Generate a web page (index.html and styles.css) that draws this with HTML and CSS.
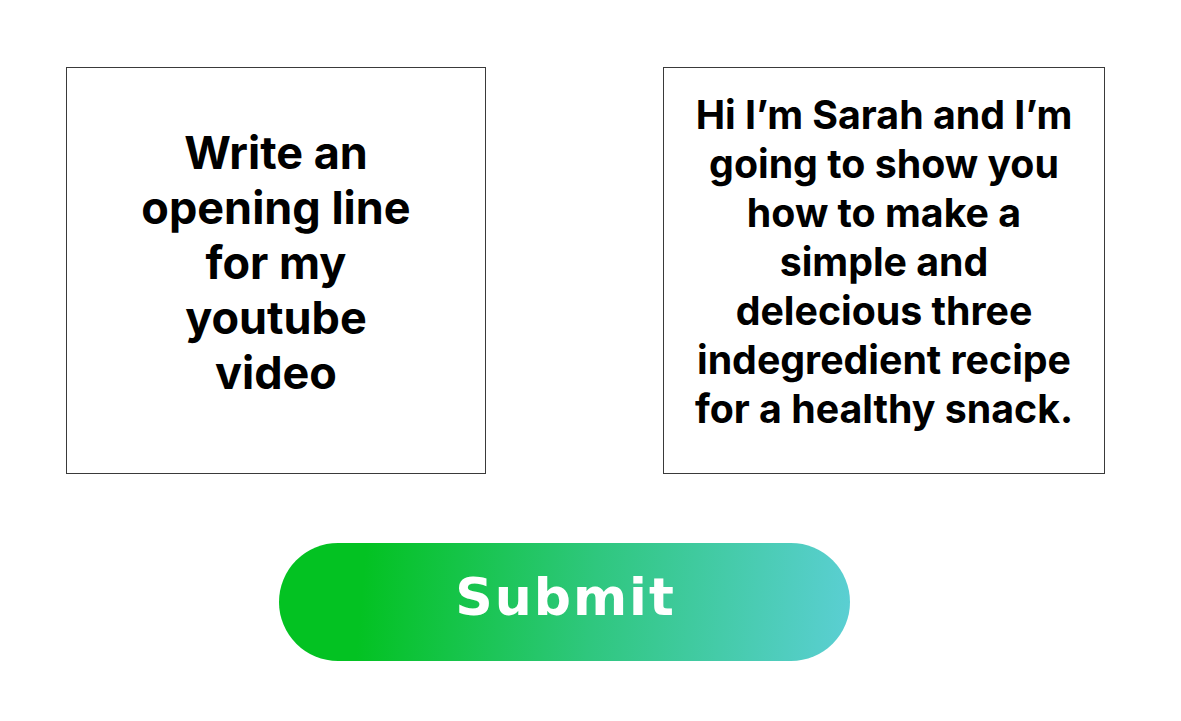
FILE: index.html
```html
<!DOCTYPE html>
<html lang="en">
<head>
<meta charset="utf-8">
<title>Prompt</title>
<link rel="stylesheet" href="styles.css">
</head>
<body>
<div class="page">
  <div class="row">
    <div class="card card-prompt">
      <p class="card-text text-prompt">Write an opening line for my youtube video</p>
    </div>
    <div class="card card-answer">
      <p class="card-text text-answer">Hi I’m Sarah and I’m going to show you how to make a simple and delecious three indegredient recipe for a healthy snack.</p>
    </div>
  </div>
  <div class="actions">
    <button class="submit" type="button">Submit</button>
  </div>
</div>
</body>
</html>
```

FILE: styles.css
```css
html, body {
  margin: 0;
  padding: 0;
  background: #ffffff;
}

.page {
  padding: 67px 0 0 66px;
}

.row {
  display: flex;
  gap: 177px;
}

.card {
  box-sizing: border-box;
  height: 407px;
  border: 1.5px solid #3a3a3a;
  display: flex;
  align-items: center;
  justify-content: center;
  padding-bottom: 16px;
}

.card-prompt {
  width: 420px;
}

.card-answer {
  width: 442px;
}

.card-text {
  margin: 0;
  font-family: Inter, "Liberation Sans", sans-serif;
  font-weight: 700;
  color: #000;
  text-align: center;
}

.text-prompt {
  font-size: 45px;
  line-height: 55px;
  width: 290px;
}

.text-answer {
  font-size: 39.3px;
  line-height: 49px;
  width: 390px;
  padding-bottom: 2px;
}

.actions {
  margin-top: 69px;
  padding-left: 213px;
}

.submit {
  width: 571px;
  height: 118px;
  border: none;
  border-radius: 59px;
  background: linear-gradient(95deg, #03c222 15%, #2fc77e 55%, #5bcfd4 100%);
  color: #ffffff;
  font-family: "DejaVu Sans", sans-serif;
  font-weight: 700;
  font-size: 52px;
  letter-spacing: 2px;
  padding: 0 0 10px 2px;
  cursor: pointer;
}
```
